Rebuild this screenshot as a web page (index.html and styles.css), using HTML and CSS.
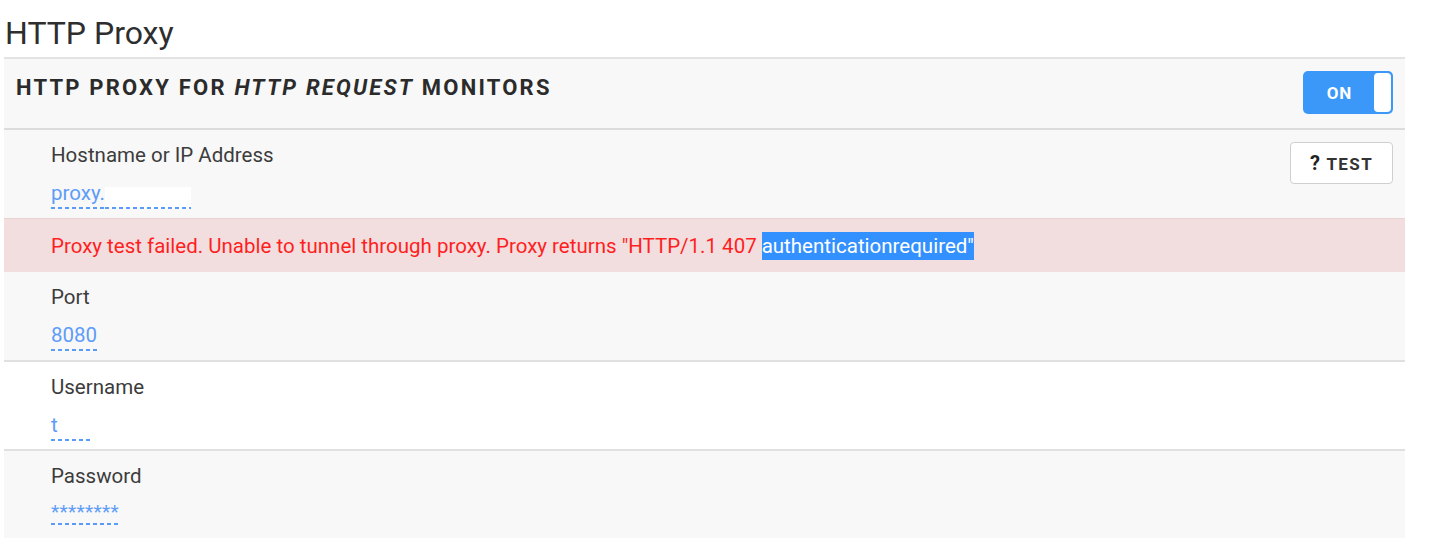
FILE: index.html
```html
<!DOCTYPE html>
<html>
<head>
<meta charset="utf-8">
<link rel="stylesheet" href="styles.css">
</head>
<body>
<h1 class="page-title">HTTP Proxy</h1>
<section class="panel">
  <div class="panel-head">
    <h2 class="panel-title">HTTP PROXY FOR <em>HTTP REQUEST</em> MONITORS</h2>
    <div class="toggle"><span class="toggle-label">ON</span><span class="toggle-knob"></span></div>
  </div>
  <div class="field field-shaded field-host">
    <div class="field-body">
      <div class="field-label">Hostname or IP Address</div>
      <div class="field-value"><span class="value-text">proxy.</span><span class="redacted"></span></div>
    </div>
    <button class="test-btn"><span class="q">?</span> TEST</button>
  </div>
  <div class="alert">Proxy test failed. Unable to tunnel through proxy. Proxy returns "HTTP/1.1 407 <span class="selected">authenticationrequired"</span></div>
  <div class="field field-shaded">
    <div class="field-body">
      <div class="field-label">Port</div>
      <div class="field-value"><span class="value-text pad-port">8080</span></div>
    </div>
  </div>
  <div class="field field-plain">
    <div class="field-body">
      <div class="field-label">Username</div>
      <div class="field-value"><span class="value-text pad-user">t</span></div>
    </div>
  </div>
  <div class="field field-shaded">
    <div class="field-body">
      <div class="field-label">Password</div>
      <div class="field-value"><span class="value-text stars">********</span></div>
    </div>
  </div>
</section>
</body>
</html>
```

FILE: styles.css
```css
* { box-sizing: border-box; }
html, body { margin: 0; padding: 0; background: #fff; }
body {
  font-family: Roboto, "Liberation Sans", Arial, sans-serif;
  color: #333;
  width: 1430px;
  height: 553px;
  overflow: hidden;
}
.page-title {
  margin: 0;
  padding: 13px 0 0 5px;
  height: 57px;
  font-size: 32px;
  font-weight: 400;
  line-height: 40px;
  color: #2e2e2e;
}
.panel {
  margin-left: 4px;
  width: 1401px;
  border-top: 2px solid #e3e3e3;
}
.panel-head {
  background: #f8f8f8;
  height: 71px;
  display: flex;
  justify-content: space-between;
  align-items: flex-start;
  padding: 12px 12px 0 12px;
  border-bottom: 2px solid #dcdcdc;
}
.panel-title {
  margin: 0;
  padding-top: 4px;
  font-size: 22px;
  line-height: 26px;
  font-weight: 700;
  letter-spacing: 2.2px;
  color: #2b2b2b;
}
.panel-title em { font-style: italic; }
.toggle {
  width: 90px;
  height: 43px;
  background: #3b98f9;
  border-radius: 5px;
  display: flex;
  align-items: center;
  padding: 2px;
}
.toggle-label {
  flex: 1;
  text-align: center;
  color: #fff;
  font-weight: 700;
  font-size: 17px;
  letter-spacing: 1px;
}
.toggle-knob {
  width: 17px;
  height: 39px;
  background: #fff;
  border-radius: 4px;
}
.field {
  display: flex;
  justify-content: space-between;
  align-items: flex-start;
  padding: 12px 12px 0 47px;
  height: 88px;
}
.field-shaded { background: #f8f8f8; }
.field-plain { background: #fff; }
.field + .field { border-top: 2px solid #e0e0e0; height: 89px; }
.field-label {
  font-size: 20.5px;
  line-height: 26px;
  color: #3c3c3c;
}
.field-value {
  margin-top: 13px;
  font-size: 20.5px;
  line-height: 24px;
  display: flex;
}
.value-text, .redacted {
  background-image: repeating-linear-gradient(to right, #5a9bf6 0 4px, transparent 4px 7px);
  background-repeat: no-repeat;
  background-position: left bottom;
  background-size: 100% 2px;
}
.value-text {
  color: #5e9cf7;
  padding-bottom: 4px;
}
.redacted {
  display: inline-block;
  width: 86px;
  height: 22px;
  background-color: #fff;
  align-self: flex-end;
}
.pad-port { padding-right: 1px; }
.pad-user { padding-right: 34px; }
.stars { font-size: 19px; line-height: 20px; letter-spacing: 0.3px; padding-bottom: 3px; padding-right: 2px; }
.test-btn {
  width: 103px;
  height: 42px;
  background: #fff;
  border: 1px solid #cfcfcf;
  border-radius: 4px;
  font-family: Roboto, "Liberation Sans", Arial, sans-serif;
  font-size: 17px;
  font-weight: 700;
  letter-spacing: 1.4px;
  color: #333;
  padding: 0;
}
.test-btn .q { font-size: 20px; color: #222; }
.alert {
  background: #f2dede;
  border-top: 1px solid #e6d3d3;
  height: 54px;
  padding: 0 0 0 47px;
  display: flex;
  align-items: center;
  color: #ff1f1f;
  font-size: 20.5px;
}
.selected {
  background: #3390ff;
  color: #fff;
  padding: 2px 0;
  margin-left: 5px;
}
```
